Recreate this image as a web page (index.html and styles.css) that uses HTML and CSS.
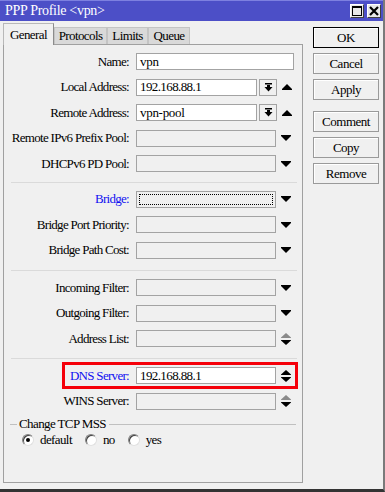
FILE: index.html
```html
<!DOCTYPE html>
<html>
<head>
<meta charset="utf-8">
<link rel="stylesheet" href="styles.css">
</head>
<body>
<div class="window">
  <div class="titlebar">
    <span class="title">PPP Profile &lt;vpn&gt;</span>
    <div class="tb-btns">
      <span class="tb-btn"><svg width="10" height="10" viewBox="0 0 10 10"><rect x="0.5" y="0.5" width="9" height="9" fill="none" stroke="#000"/><rect x="0" y="0" width="10" height="2" fill="#000"/></svg></span>
      <span class="tb-btn"><svg width="10" height="10" viewBox="0 0 10 10"><path d="M1 1L9 9M9 1L1 9" stroke="#000" stroke-width="2.2"/></svg></span>
    </div>
  </div>
  <div class="body">
    <div class="left">
      <div class="tabs">
        <span class="tab active">General</span>
        <span class="tab">Protocols</span>
        <span class="tab">Limits</span>
        <span class="tab">Queue</span>
      </div>
      <div class="panel">
        <div class="section first">
          <div class="row">
            <span class="label">Name:</span>
            <span class="input wide white">vpn</span>
          </div>
          <div class="row">
            <span class="label">Local Address:</span>
            <span class="input short white num">192.168.88.1</span>
            <span class="boxbtn"><svg width="9" height="9" viewBox="0 0 9 9"><rect x="1" y="0" width="7" height="1.5" fill="#000"/><rect x="3" y="2" width="3" height="2" fill="#000"/><path d="M0.5 4H8.5L4.5 8.5Z" fill="#000"/></svg></span>
            <span class="icon"><svg width="10" height="6" viewBox="0 0 10 6"><path d="M0 6H10V5L5 0 0 5Z" fill="#000"/></svg></span>
          </div>
          <div class="row">
            <span class="label">Remote Address:</span>
            <span class="input short white">vpn-pool</span>
            <span class="boxbtn"><svg width="9" height="9" viewBox="0 0 9 9"><rect x="1" y="0" width="7" height="1.5" fill="#000"/><rect x="3" y="2" width="3" height="2" fill="#000"/><path d="M0.5 4H8.5L4.5 8.5Z" fill="#000"/></svg></span>
            <span class="icon"><svg width="10" height="6" viewBox="0 0 10 6"><path d="M0 6H10V5L5 0 0 5Z" fill="#000"/></svg></span>
          </div>
          <div class="row">
            <span class="label">Remote IPv6 Prefix Pool:</span>
            <span class="input"></span>
            <span class="icon"><svg width="10" height="6" viewBox="0 0 10 6"><path d="M0 0H10V1L5 6 0 1Z" fill="#000"/></svg></span>
          </div>
          <div class="row">
            <span class="label">DHCPv6 PD Pool:</span>
            <span class="input"></span>
            <span class="icon"><svg width="10" height="6" viewBox="0 0 10 6"><path d="M0 0H10V1L5 6 0 1Z" fill="#000"/></svg></span>
          </div>
        </div>
        <div class="sep s1"></div>
        <div class="section">
          <div class="row">
            <span class="label blue">Bridge:</span>
            <span class="input focus"><span class="dots"></span></span>
            <span class="icon"><svg width="10" height="6" viewBox="0 0 10 6"><path d="M0 0H10V1L5 6 0 1Z" fill="#000"/></svg></span>
          </div>
          <div class="row">
            <span class="label">Bridge Port Priority:</span>
            <span class="input"></span>
            <span class="icon"><svg width="10" height="6" viewBox="0 0 10 6"><path d="M0 0H10V1L5 6 0 1Z" fill="#000"/></svg></span>
          </div>
          <div class="row">
            <span class="label">Bridge Path Cost:</span>
            <span class="input"></span>
            <span class="icon"><svg width="10" height="6" viewBox="0 0 10 6"><path d="M0 0H10V1L5 6 0 1Z" fill="#000"/></svg></span>
          </div>
        </div>
        <div class="sep s2"></div>
        <div class="section">
          <div class="row">
            <span class="label">Incoming Filter:</span>
            <span class="input"></span>
            <span class="icon"><svg width="10" height="6" viewBox="0 0 10 6"><path d="M0 0H10V1L5 6 0 1Z" fill="#000"/></svg></span>
          </div>
          <div class="row">
            <span class="label">Outgoing Filter:</span>
            <span class="input"></span>
            <span class="icon"><svg width="10" height="6" viewBox="0 0 10 6"><path d="M0 0H10V1L5 6 0 1Z" fill="#000"/></svg></span>
          </div>
          <div class="row">
            <span class="label">Address List:</span>
            <span class="input"></span>
            <span class="icon"><svg width="10" height="12" viewBox="0 0 10 12"><path d="M0 5H10V4.5L5 0 0 4.5Z" fill="#8a8a8a"/><path d="M0 7H10V7.5L5 12 0 7.5Z" fill="#000"/></svg></span>
          </div>
        </div>
        <div class="sep s3"></div>
        <div class="section">
          <div class="row">
            <div class="hl">
              <span class="label blue">DNS Server:</span>
              <span class="input white num">192.168.88.1</span>
              <span class="icon"><svg width="10" height="12" viewBox="0 0 10 12"><path d="M0 5H10V4.5L5 0 0 4.5Z" fill="#000"/><path d="M0 7H10V7.5L5 12 0 7.5Z" fill="#000"/></svg></span>
            </div>
          </div>
          <div class="row">
            <span class="label">WINS Server:</span>
            <span class="input"></span>
            <span class="icon"><svg width="10" height="12" viewBox="0 0 10 12"><path d="M0 5H10V4.5L5 0 0 4.5Z" fill="#8a8a8a"/><path d="M0 7H10V7.5L5 12 0 7.5Z" fill="#000"/></svg></span>
          </div>
        </div>
        <div class="group">
          <span class="gline lead"></span>
          <span class="gtitle">Change TCP MSS</span>
          <span class="gline"></span>
        </div>
        <div class="radios">
          <span class="radio"><span class="circle on"></span><span class="rtext">default</span></span>
          <span class="radio"><span class="circle"></span><span class="rtext">no</span></span>
          <span class="radio"><span class="circle"></span><span class="rtext">yes</span></span>
        </div>
      </div>
    </div>
    <div class="buttons">
      <span class="btn default">OK</span>
      <span class="btn">Cancel</span>
      <span class="btn">Apply</span>
      <span class="btn gap">Comment</span>
      <span class="btn">Copy</span>
      <span class="btn">Remove</span>
    </div>
  </div>
</div>
</body>
</html>
```
FILE: styles.css
```css
html, body {
  margin: 0;
  padding: 0;
  background: #f0f0f0;
}
body {
  font-family: "Liberation Serif", "Times New Roman", serif;
  font-size: 13px;
  color: #000;
}
.window {
  width: 385px;
  height: 492px;
  box-sizing: border-box;
  border-right: 2px solid #7a7a7a;
  border-bottom: 3px solid #333;
  display: flex;
  flex-direction: column;
  overflow: hidden;
}
.titlebar {
  height: 21px;
  flex: none;
  background: #4c4fc7;
  border-top: 1px solid #7d80e0;
  box-sizing: border-box;
  display: flex;
  align-items: center;
  justify-content: space-between;
  padding: 0 2px 0 5px;
}
.title {
  color: #fff;
  font-size: 14px;
  letter-spacing: -0.3px;
}
.tb-btns {
  display: flex;
  gap: 3px;
}
.tb-btn {
  width: 14px;
  height: 14px;
  box-sizing: border-box;
  background: #e8e8e8;
  border: 1px solid;
  border-color: #fff #404040 #404040 #fff;
  display: flex;
  align-items: center;
  justify-content: center;
}
.tb-btn svg { display: block; }
.body {
  flex: 1;
  display: flex;
  align-items: flex-start;
}
.left {
  margin-left: 3px;
  width: 300px;
  display: flex;
  flex-direction: column;
}
.tabs {
  height: 23px;
  display: flex;
  align-items: flex-end;
}
.tab {
  height: 17px;
  box-sizing: border-box;
  background: #d9d9d9;
  border: 1px solid #c4c4c4;
  border-bottom: none;
  padding: 0 3px 0 3px;
  display: flex;
  align-items: center;
  letter-spacing: -0.6px;
}
.tab.active {
  height: 22px;
  margin-bottom: -1px;
  background: #f0f0f0;
  border-color: #b8b8b8 #8c8c8c #8c8c8c #b8b8b8;
  padding: 0 6px 0 6px;
  position: relative;
  z-index: 1;
}
.tab:nth-child(2) { width: 53px; justify-content: center; }
.tab:nth-child(3) { width: 41px; justify-content: center; }
.tab:nth-child(4) { width: 42px; justify-content: center; }
.tab.active { width: 51px; justify-content: center; }
.panel {
  height: 439px;
  box-sizing: border-box;
  border: 1px solid #a0a0a0;
  border-top-color: #a0a0a0;
  display: flex;
  flex-direction: column;
}
.section.first { padding-top: 4px; }
.row {
  height: 25.5px;
  display: flex;
  align-items: center;
}
.label {
  width: 125px;
  flex: none;
  text-align: right;
  white-space: nowrap;
  letter-spacing: -0.7px;
  margin-right: 7px;
}
.label.blue { color: #1010f0; }
.input {
  width: 140px;
  height: 17px;
  flex: none;
  box-sizing: border-box;
  border: 1px solid #a3a3a3;
  background: #f0f0f0;
  padding-left: 3px;
  display: flex;
  align-items: center;
  font-size: 13px;
  letter-spacing: -0.3px;
  white-space: nowrap;
}
.input.white { background: #fff; }
.input.wide { width: 158px; }
.input.short { width: 121px; }
.input.num { letter-spacing: -0.6px; font-size: 13px; }
.input.focus { padding: 2px; }
.dots {
  flex: 1;
  align-self: stretch;
  border: 1px dotted #000;
}
.boxbtn {
  width: 18px;
  height: 17px;
  flex: none;
  box-sizing: border-box;
  margin-left: 2px;
  border: 1px solid #a3a3a3;
  background: #f0f0f0;
  display: flex;
  align-items: center;
  justify-content: center;
}
.boxbtn svg { display: block; }
.icon {
  width: 19px;
  flex: none;
  display: flex;
  align-items: center;
  justify-content: center;
}
.icon svg { display: block; }
.sep {
  height: 1px;
  background: #dadada;
  margin-left: 7px;
  margin-right: 5px;
  flex: none;
}
.sep.s1 { margin-top: 5.5px; margin-bottom: 3.5px; }
.sep.s2 { margin-top: 7px; margin-bottom: 4px; }
.sep.s3 { margin-top: 6.5px; margin-bottom: 4px; }
.hl {
  margin-left: 61px;
  height: 20.6px;
  display: flex;
  align-items: center;
  outline: 3px solid #f5000a;
}
.hl .label { width: 64px; }
.group {
  margin-top: 3px;
  height: 14px;
  display: flex;
  align-items: center;
  padding-left: 6px;
  padding-right: 6px;
}
.gline {
  flex: 1;
  height: 1px;
  background: #c0c0c0;
}
.gline.lead { flex: none; width: 7px; }
.gtitle {
  padding: 0 3px 0 2px;
  letter-spacing: -0.6px;
  white-space: nowrap;
}
.radios {
  margin-top: 2px;
  height: 14px;
  display: flex;
  align-items: center;
  padding-left: 18px;
  gap: 13px;
}
.radio {
  display: flex;
  align-items: center;
  gap: 6px;
}
.rtext { letter-spacing: -0.6px; }
.circle {
  width: 12px;
  height: 12px;
  box-sizing: border-box;
  border-radius: 50%;
  border: 1px solid;
  border-color: #808080 #e0e0e0 #e0e0e0 #808080;
  background: #fff;
  box-shadow: inset 1px 1px 0 #404040;
  display: flex;
  align-items: center;
  justify-content: center;
}
.circle.on::after {
  content: "";
  width: 4px;
  height: 4px;
  border-radius: 50%;
  background: #000;
}
.buttons {
  margin-left: 10px;
  margin-top: 6px;
  width: 66px;
  display: flex;
  flex-direction: column;
  gap: 5px;
}
.btn {
  height: 21px;
  box-sizing: border-box;
  border: 1px solid #9a9a9a;
  box-shadow: inset 1px 1px 0 #fff;
  background: #f0f0f0;
  display: flex;
  align-items: center;
  justify-content: center;
  letter-spacing: -0.5px;
}
.btn.default { border: 1px solid #000; }
.btn.gap { margin-top: 6px; }
```
